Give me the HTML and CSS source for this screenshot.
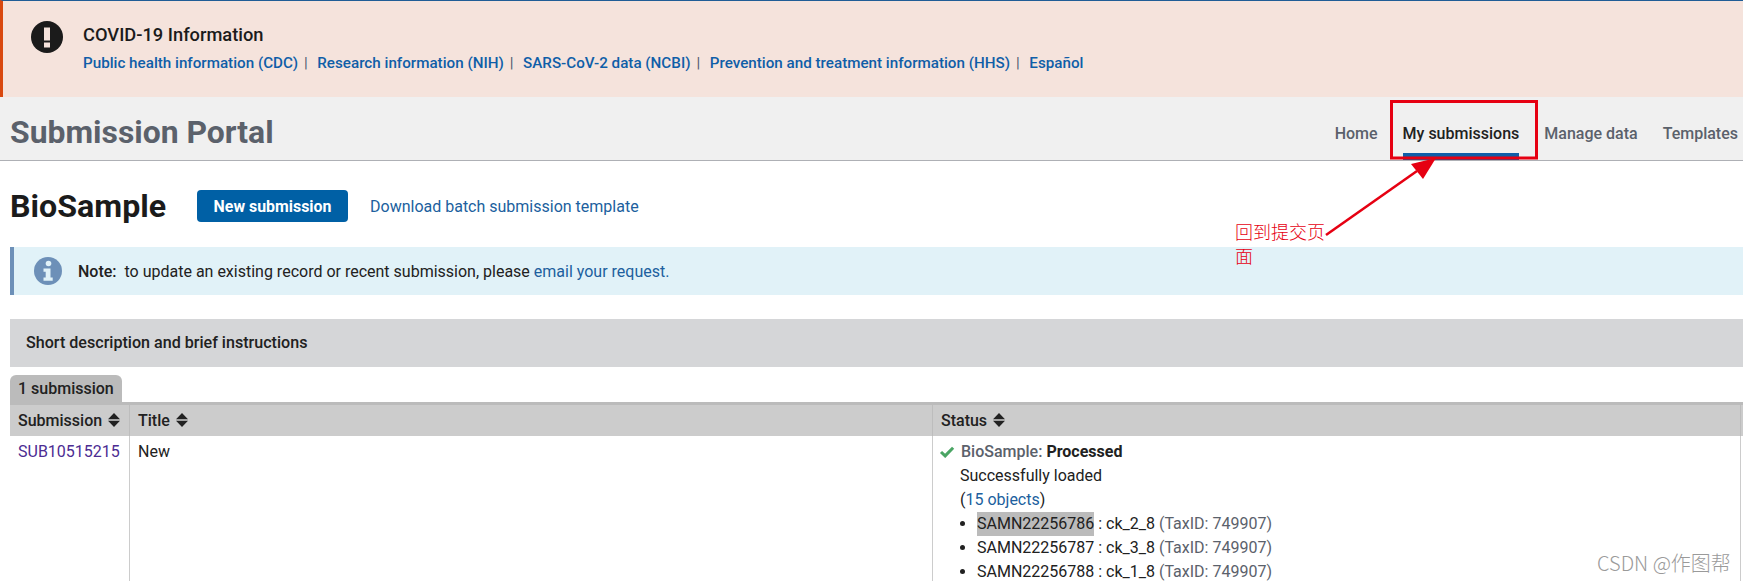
FILE: index.html
```html
<!DOCTYPE html>
<html lang="en">
<head>
<meta charset="utf-8">
<title>Submission Portal</title>
<link rel="stylesheet" href="styles.css">
</head>
<body>
<div class="page">
  <section class="alert">
    <svg class="alert-icon" viewBox="0 0 32 32" aria-hidden="true"><circle cx="16" cy="16" r="16" fill="#1b1b1b"/><rect x="13" y="6.5" width="6" height="13" fill="#f5e3dc"/><rect x="13" y="21.5" width="6" height="5" fill="#f5e3dc"/></svg>
    <div class="alert-body">
      <div class="alert-title">COVID-19 Information</div>
      <div class="alert-links">
        <a href="#">Public health information (CDC)</a><span class="sep">|</span>
        <a href="#">Research information (NIH)</a><span class="sep">|</span>
        <a href="#">SARS-CoV-2 data (NCBI)</a><span class="sep">|</span>
        <a href="#">Prevention and treatment information (HHS)</a><span class="sep">|</span>
        <a href="#">Español</a>
      </div>
    </div>
  </section>

  <header class="portal">
    <div class="portal-name">Submission Portal</div>
    <nav class="nav">
      <a class="nav-item" href="#">Home</a>
      <a class="nav-item nav-active" href="#">My submissions</a>
      <a class="nav-item" href="#">Manage data</a>
      <a class="nav-item" href="#">Templates</a>
    </nav>
  </header>

  <main class="content">
    <div class="title-row">
      <h1 class="title">BioSample</h1>
      <a class="btn" href="#">New submission</a>
      <a class="dl" href="#">Download batch submission template</a>
    </div>

    <div class="note">
      <svg class="note-icon" viewBox="0 0 28 28" aria-hidden="true"><circle cx="14" cy="14" r="14" fill="#6d90b8"/><circle cx="14.5" cy="6.5" r="2.8" fill="#e1f2f8"/><path d="M9.5 11.5h7v9h2.2v3.2H9.5v-3.2h2.2v-5.8H9.5z" fill="#e1f2f8"/></svg>
      <p class="note-text"><b>Note:</b>&nbsp; to update an existing record or recent submission, please <a href="#">email your request.</a></p>
    </div>

    <div class="instructions">Short description and brief instructions</div>

    <div class="tab">1 submission</div>
    <div class="grid">
      <div class="cell-head col-sub">Submission <svg class="sort" viewBox="0 0 12 14" aria-hidden="true"><path d="M6 0l6 6.2H0zM6 14L0 7.8h12z"/></svg></div>
      <div class="cell-head col-title">Title <svg class="sort" viewBox="0 0 12 14" aria-hidden="true"><path d="M6 0l6 6.2H0zM6 14L0 7.8h12z"/></svg></div>
      <div class="cell-head col-status">Status <svg class="sort" viewBox="0 0 12 14" aria-hidden="true"><path d="M6 0l6 6.2H0zM6 14L0 7.8h12z"/></svg></div>
      <div class="cell-head col-end"></div>

      <div class="cell col-sub"><a class="visited" href="#">SUB10515215</a></div>
      <div class="cell col-title">New</div>
      <div class="cell col-status">
        <div class="state">
          <svg class="check" viewBox="0 0 14 11" aria-hidden="true"><path d="M1.5 5.5l3.8 3.6L12.6 1.6" fill="none" stroke="#4aa564" stroke-width="2.8"/></svg>
          <span class="state-label">BioSample:</span> <b>Processed</b>
        </div>
        <div class="line">Successfully loaded</div>
        <div class="line">(<a href="#">15 objects</a>)</div>
        <ul class="samples">
          <li><span class="hl">SAMN22256786</span> : ck_2_8 <span class="tax">(TaxID: 749907)</span></li>
          <li>SAMN22256787 : ck_3_8 <span class="tax">(TaxID: 749907)</span></li>
          <li>SAMN22256788 : ck_1_8 <span class="tax">(TaxID: 749907)</span></li>
        </ul>
      </div>
      <div class="cell col-end"></div>
    </div>
  </main>

  <svg class="annot-svg" viewBox="0 0 1743 581" aria-hidden="true">
    <rect x="1391.5" y="101.5" width="145" height="56.5" fill="none" stroke="#e60012" stroke-width="3"/>
    <path d="M1326 235L1417 171" stroke="#e60012" stroke-width="2.6" fill="none"/>
    <path d="M1436 158L1411 164L1423 179Z" fill="#e60012"/>
  </svg>
  <div class="annot-text">回到提交页<br>面</div>
  <div class="watermark">CSDN @作图帮</div>
</div>
</body>
</html>
```
FILE: styles.css
```css
* { box-sizing: border-box; }
html, body { margin: 0; padding: 0; }
body { font-family: Roboto, "Liberation Sans", sans-serif; color: #212121; background: #fff; overflow: hidden; }
.page { position: relative; width: 1743px; height: 581px; overflow: hidden; }
a { color: #205f9e; text-decoration: none; }

.alert { height: 97px; display: flex; align-items: flex-start; padding: 21px 0 0 28px; background: #f5e3dc; border-top: 1px solid #205d96; border-left: 3px solid #d9480f; }
.alert-icon { width: 32px; height: 32px; margin-top: -1px; flex: none; }
.alert-body { margin-left: 20px; }
.alert-title { font-size: 18.3px; font-weight: 500; line-height: 22px; margin-top: 2px; color: #1b1b1b; }
.alert-links { font-size: 15.2px; font-weight: 500; line-height: 20px; margin-top: 7px; white-space: nowrap; }
.alert-links a { color: #0f5ea8; }
.sep { margin: 0 5.8px 0 6px; font-weight: 400; color: #4d5a70; }

.portal { height: 64px; display: flex; justify-content: space-between; background: #f0f0f0; border-bottom: 1px solid #aeb0b5; padding-left: 10px; }
.portal-name { font-size: 31.9px; font-weight: 700; color: #5b616b; line-height: 71px; }
.nav { display: flex; gap: 25px; padding-right: 5px; }
.nav-item { font-size: 16px; font-weight: 500; color: #5b616b; height: 63px; line-height: 74px; }
.nav-active { color: #212121; border-bottom: 7px solid #0f5ea8; }

.content { padding-left: 10px; }
.title-row { display: flex; align-items: center; height: 86px; padding-top: 3px; }
.title { margin: 0; width: 156px; font-size: 32.2px; font-weight: 700; color: #1b1b1b; line-height: 40px; white-space: nowrap; }
.btn { margin-left: 31px; width: 151px; height: 32px; line-height: 33px; text-align: center; background: #0060a5; color: #fff; border-radius: 4px; font-size: 15.9px; font-weight: 700; }
.dl { margin-left: 22px; font-size: 16px; line-height: 22px; padding-top: 2px; color: #205f9e; }

.note { height: 48px; display: flex; align-items: center; background: #e1f2f8; border-left: 4px solid #6d90b8; padding-left: 20px; }
.note-icon { width: 28px; height: 28px; flex: none; }
.note-text { margin: 0 0 0 16px; font-size: 16px; }
.note-text b { font-weight: 500; }

.instructions { margin-top: 24px; height: 48px; line-height: 47px; background: #d5d6d8; padding-left: 16px; font-size: 16.1px; font-weight: 500; }

.tab { margin-top: 8px; width: 112px; height: 27px; line-height: 28px; background: #bbb; border-radius: 6px 6px 0 0; padding-left: 8px; font-size: 16px; font-weight: 500; }

.grid { display: grid; grid-template-columns: 119px 803px 808px 3px; border-top: 3px solid #bbb; font-size: 16px; }
.cell-head { height: 31px; line-height: 31px; background: #ccc; font-weight: 500; padding-left: 8px; border-left: 1px solid #bdbdbd; white-space: nowrap; }
.cell { padding: 4px 0 0 8px; line-height: 24px; border-left: 1px solid #ccc; min-height: 160px; }
.col-sub { border-left: 0; }
.col-end { padding: 0; }
.sort { width: 12px; height: 14px; margin-left: 2px; vertical-align: -1px; fill: #212121; }
.visited { color: #4c2c92; }
.state { display: flex; align-items: center; gap: 4px; margin-left: -2px; }
.check { width: 16px; height: 12px; margin-right: 2px; flex: none; }
.state-label { color: #5b616b; font-weight: 500; }
.state b { font-weight: 700; }
.line { padding-left: 19px; }
.samples { margin: 0; padding: 0 0 0 36px; }
.samples li { line-height: 24px; }
.hl { background: #bbb; display: inline-block; }
.tax { color: #5b616b; }

.annot-svg { position: absolute; left: 0; top: 0; width: 1743px; height: 581px; pointer-events: none; }
.annot-text { position: absolute; left: 1235px; top: 219px; font-family: "Noto Sans CJK SC", sans-serif; font-weight: 300; font-size: 18px; line-height: 24px; color: #e60012; }
.watermark { position: absolute; left: 1597px; top: 552px; font-family: "Noto Sans CJK SC", sans-serif; font-weight: 300; font-size: 20px; line-height: 22px; color: #9a9a9a; white-space: nowrap; }
```
